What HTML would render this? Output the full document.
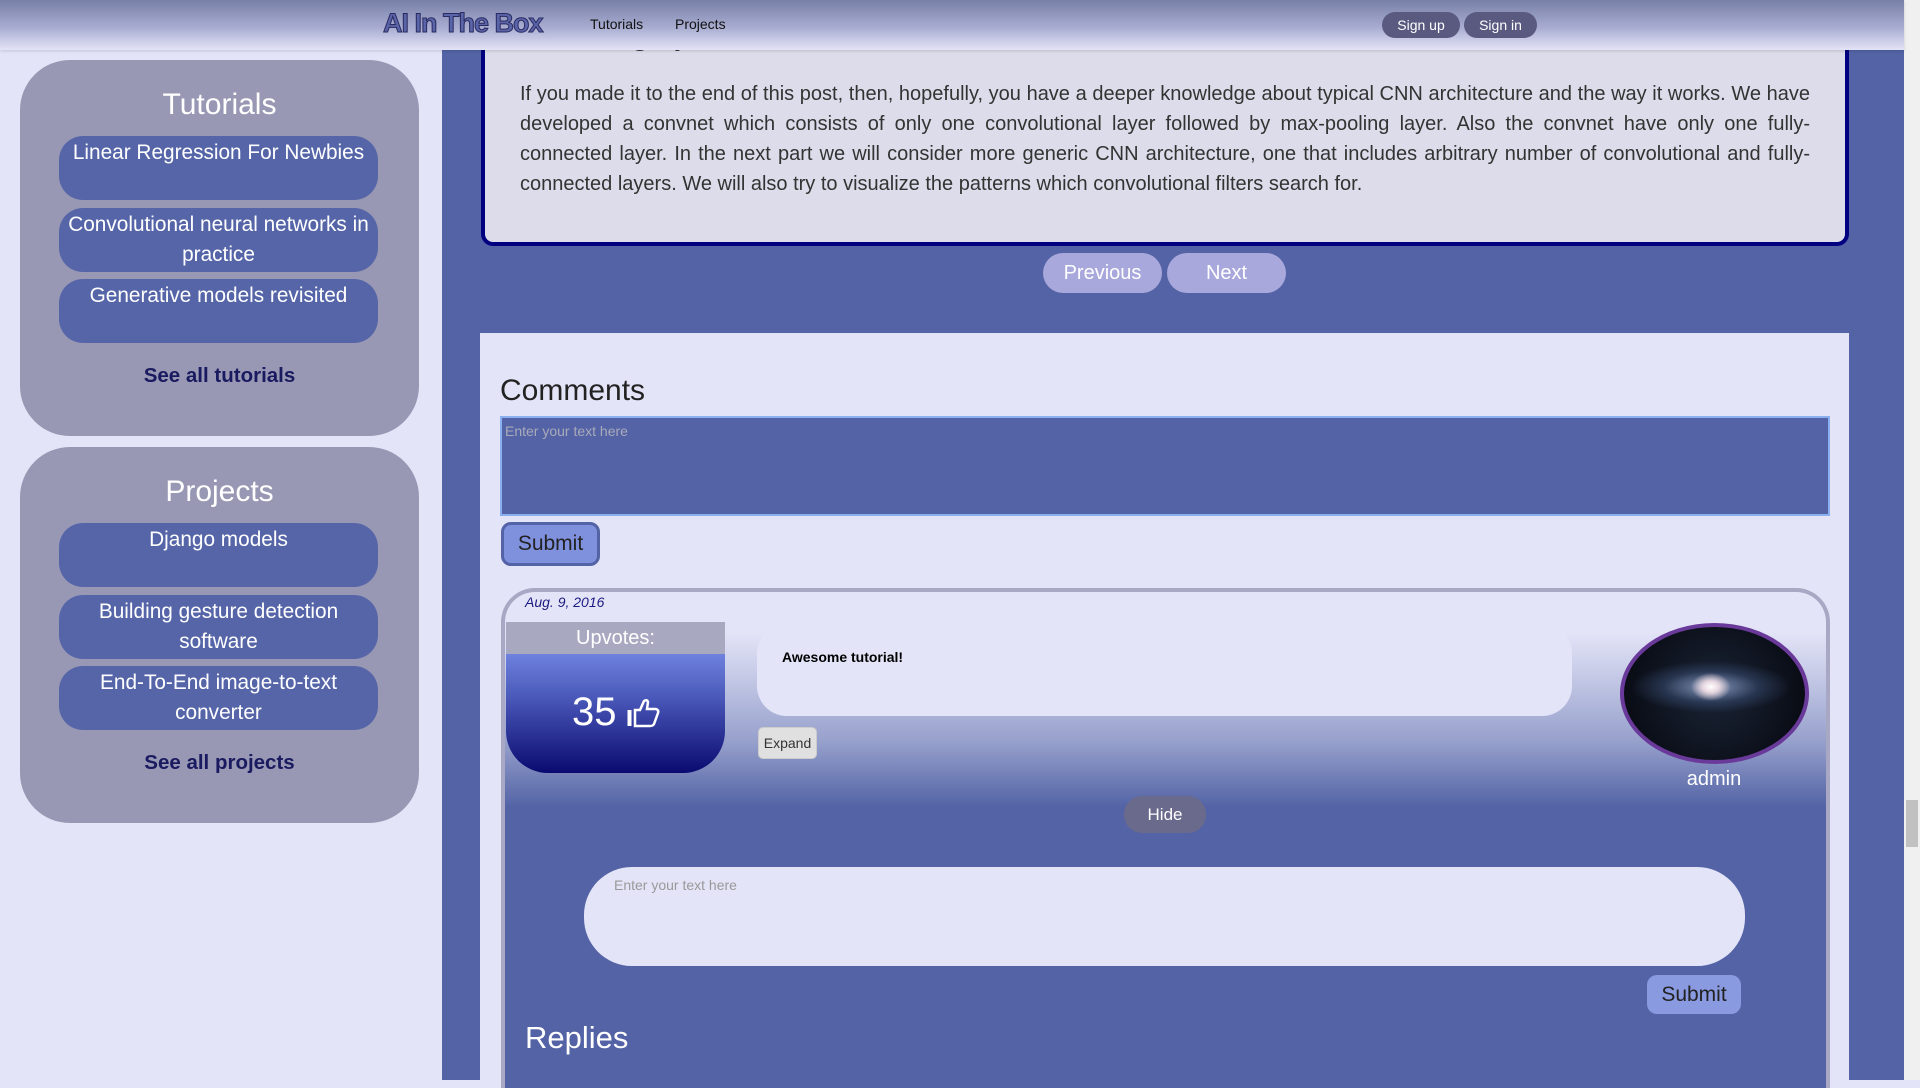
<!DOCTYPE html>
<html><head><meta charset="utf-8"><style>
*{box-sizing:border-box;margin:0;padding:0}
body{width:1920px;height:1080px;overflow:hidden;background:#e4e4f8;font-family:"Liberation Sans",sans-serif;position:relative}
.abs{position:absolute}
.nav{left:0;top:0;width:1904px;height:50px;background:linear-gradient(#7880a8,#a8acd0 55%,#e4e4f8);z-index:5;box-shadow:0 1px 3px rgba(0,0,0,.15)}
.logo{left:383px;top:8px;font-size:27px;font-weight:bold;color:#5a64a8;-webkit-text-stroke:1px #2a2a60;letter-spacing:-1px}
.nl{top:16px;font-size:14px;color:#111}
.nb{top:12px;height:26px;border-radius:13px;background:#5a5a80;color:#fff;font-size:14px;text-align:center;line-height:26px}
.side{left:20px;width:399px;background:#9898b4;border-radius:50px}
.side h2{position:absolute;left:0;width:100%;text-align:center;color:#fff;font-weight:normal;font-size:30px}
.item{position:absolute;left:39px;width:319px;height:64px;background:#5565a8;border-radius:24px;color:#fff;font-size:20.8px;text-align:center;line-height:30px;padding:2px 6px 0}
.see{position:absolute;left:0;width:100%;text-align:center;font-weight:bold;font-size:20.5px;color:#1a1a60}
.main{left:442px;top:0;width:1462px;height:1080px;background:#5363a5}
.sb{left:1904px;top:0;width:16px;height:1080px;background:#f0f0f0}
.art{left:481px;top:-20px;width:1368px;height:266px;background:#dcdcea;border:4px solid #000080;border-top:none;border-radius:0 0 12px 12px}
.art .p{position:absolute;left:35px;top:99px;width:1290px;font-size:20px;line-height:30px;color:#333}
.art .p div{text-align:justify;text-align-last:justify;white-space:nowrap}
.art .p div.l{text-align-last:left}
.pn{top:253px;width:119px;height:40px;border-radius:20px;background:#a8a8dc;color:#fff;font-size:20px;text-align:center;line-height:40px}
.com{left:480px;top:333px;width:1369px;height:747px;background:#e4e4f8}
</style></head><body>
<div class="abs main"></div>
<div class="abs art"><div style="position:absolute;left:36px;top:40px;font-size:28px;font-weight:bold;color:#333">Summing up</div><div class="p">
<div>If you made it to the end of this post, then, hopefully, you have a deeper knowledge about typical CNN architecture and the way it works. We have</div>
<div>developed a convnet which consists of only one convolutional layer followed by max-pooling layer. Also the convnet have only one fully-</div>
<div>connected layer. In the next part we will consider more generic CNN architecture, one that includes arbitrary number of convolutional and fully-</div>
<div class="l">connected layers. We will also try to visualize the patterns which convolutional filters search for.</div>
</div></div>
<div class="abs pn" style="left:1043px">Previous</div>
<div class="abs pn" style="left:1167px">Next</div>
<div class="abs com"></div>
<div class="abs" style="left:500px;top:374px;font-size:30px;color:#222">Comments</div>
<div class="abs" style="left:500px;top:416px;width:1330px;height:100px;background:#5363a5;border:2px solid #8ab0f0"><span style="position:absolute;left:3px;top:5px;font-size:14px;color:#aab">Enter your text here</span></div>
<div class="abs" style="left:501px;top:522px;width:99px;height:44px;background:#7f90dc;border:3px solid #5363a5;border-radius:10px;font-size:21px;color:#222;text-align:center;line-height:38px">Submit</div>
<div class="abs" style="left:501px;top:588px;width:1329px;height:500px;border:4px solid #a8a8c4;border-bottom:none;border-radius:34px 34px 0 0;background:linear-gradient(#e4e4f8 0,#e4e4f8 40px,#c8cce8 80px,#96a0cc 150px,#5363a5 215px,#5363a5)"></div>
<div class="abs" style="left:525px;top:594px;font-size:14px;font-style:italic;color:#1a1a80">Aug. 9, 2016</div>
<div class="abs" style="left:506px;top:622px;width:219px;height:151px;border-radius:0 0 42px 42px;overflow:hidden;background:linear-gradient(#8a9ff8,#5060c0 45%,#0a0a70)">
<div style="height:32px;background:#a8a8c0;color:#fff;font-size:20px;text-align:center;line-height:32px">Upvotes:</div>
<div style="position:absolute;left:66px;top:68px;color:#fff;font-size:40px">35</div>
<svg style="position:absolute;left:120px;top:76px" width="34" height="30" viewBox="0 0 34 30"><rect x="1.5" y="12" width="4" height="16" fill="#fff"/><path d="M9 12 L14 12 L18 3 Q21 1 22 4 L21 11 L30 11 Q33 12 32 15 L28 26 Q27 28 24 28 L9 28 Z" fill="none" stroke="#fff" stroke-width="2.5"/></svg>
</div>
<div class="abs" style="left:757px;top:624px;width:815px;height:92px;background:#e4e4f8;border-radius:30px"><span style="position:absolute;left:25px;top:25px;font-size:14px;font-weight:bold;color:#000">Awesome tutorial!</span></div>
<div class="abs" style="left:758px;top:727px;width:59px;height:32px;background:#e0e0e0;border-radius:5px;border:1px solid #ccc;font-size:14px;color:#333;text-align:center;line-height:30px">Expand</div>
<div class="abs" style="left:1620px;top:623px;width:189px;height:141px;border-radius:50%;border:4px solid #6a3a9a;background:radial-gradient(ellipse 20px 14px at 48% 45%,#fff,#e8d8e0 40%,transparent 100%),radial-gradient(ellipse 80px 26px at 48% 45%,rgba(150,170,210,.85),rgba(60,80,120,.5) 60%,transparent),radial-gradient(circle at 50% 50%,#1a2436,#05060c)"></div>
<div class="abs" style="left:1614px;top:768px;width:200px;text-align:center;color:#fff;font-size:20px">admin</div>
<div class="abs" style="left:1124px;top:796px;width:82px;height:37px;border-radius:18px;background:#6a6a8c;color:#fff;font-size:17px;text-align:center;line-height:37px">Hide</div>
<div class="abs" style="left:584px;top:867px;width:1161px;height:99px;background:#e4e4f8;border-radius:48px"><span style="position:absolute;left:30px;top:10px;font-size:14px;color:#999">Enter your text here</span></div>
<div class="abs" style="left:1647px;top:975px;width:94px;height:39px;border-radius:10px;background:#8a9ae0;color:#222;font-size:21px;text-align:center;line-height:39px">Submit</div>
<div class="abs" style="left:525px;top:1020px;font-size:31px;color:#fff">Replies</div>

<div class="abs side" style="top:60px;height:376px">
<h2 style="top:28px">Tutorials</h2>
<div class="item" style="top:76px">Linear Regression For Newbies</div>
<div class="item" style="top:148px">Convolutional neural networks in practice</div>
<div class="item" style="top:219px">Generative models revisited</div>
<div class="see" style="top:304px">See all tutorials</div>
</div>
<div class="abs side" style="top:447px;height:376px">
<h2 style="top:28px">Projects</h2>
<div class="item" style="top:76px">Django models</div>
<div class="item" style="top:148px">Building gesture detection software</div>
<div class="item" style="top:219px">End-To-End image-to-text converter</div>
<div class="see" style="top:304px">See all projects</div>
</div>

<div class="abs nav"></div>
<div class="abs logo" style="z-index:6">AI In The Box</div>
<div class="abs nl" style="left:590px;z-index:6">Tutorials</div>
<div class="abs nl" style="left:675px;z-index:6">Projects</div>
<div class="abs nb" style="left:1382px;width:78px;z-index:6">Sign up</div>
<div class="abs nb" style="left:1464px;width:73px;z-index:6">Sign in</div>
<div class="abs sb"><div style="position:absolute;left:2px;top:800px;width:12px;height:47px;background:#c1c1c1"></div></div>
</body></html>
